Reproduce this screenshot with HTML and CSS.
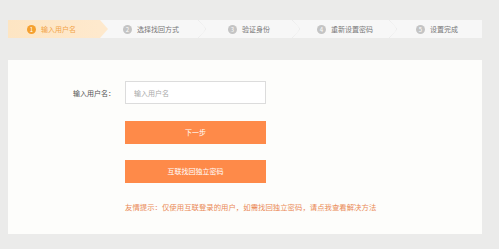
FILE: index.html
```html
<!DOCTYPE html>
<html lang="zh-CN">
<head>
  <meta charset="UTF-8">
  <title>找回密码</title>
  <link rel="stylesheet" href="styles.css">
</head>
<body>

<div class="steps">
  <div class="step now s1"><i>1</i>输入用户名</div>
  <div class="step s2"><i>2</i>选择找回方式</div>
  <div class="step s3"><i>3</i>验证身份</div>
  <div class="step s4"><i>4</i>重新设置密码</div>
  <div class="step s5"><i>5</i>设置完成</div>
</div>

<div class="panel">
  <div class="form">
    <label class="label" for="user">输入用户名：</label>
    <input class="ipt" id="user" type="text" placeholder="输入用户名">
    <a href="javascript:void(0);" class="btn">下一步</a>
    <a href="javascript:void(0);" class="btn">互联找回独立密码</a>
    <p class="tip">友情提示：仅使用互联登录的用户，如需找回独立密码，请点我查看解决方法</p>
  </div>
</div>

</body>
</html>
```

FILE: styles.css
```css
* {
  margin: 0;
  padding: 0;
  box-sizing: border-box;
}
body {
  background-color: #ebebea;
  font-family: "Noto Sans CJK SC", "Liberation Sans", sans-serif;
  font-size: 7px;
  color: #777;
  padding: 20px 17px 0 8px;
}

.steps {
  display: flex;
  height: 18px;
  background-color: #f7f7f7;
}
.step {
  display: flex;
  align-items: center;
  gap: 5px;
  padding-left: 19px;
  line-height: 18px;
  position: relative;
}
.step i {
  width: 9px;
  height: 9px;
  border-radius: 50%;
  background-color: #c4c4c4;
  color: #fff;
  font-style: normal;
  font-size: 6px;
  line-height: 9px;
  text-align: center;
}
.step::after {
  content: "";
  position: absolute;
  right: -1px;
  top: 0;
  width: 8px;
  height: 18px;
  background: linear-gradient(to top right, transparent 48%, #ececec 50%, transparent 56%) top / 100% 50% no-repeat,
              linear-gradient(to bottom right, transparent 48%, #ececec 50%, transparent 56%) bottom / 100% 50% no-repeat;
}
.s1 { width: 92px; }
.s2 { width: 105px; padding-left: 23px; }
.s3 { width: 94px; padding-left: 23px; }
.s4 { width: 97px; padding-left: 18px; }
.s5 { width: 85px; padding-left: 20px; }
.s5::after { display: none; }

.step.now {
  background: linear-gradient(to right, #fde5c3, #fee9cd);
  color: #f2a447;
}
.step.now i {
  background-color: #f5a02e;
}
.step.now::after {
  right: -8px;
  background: #fee9cd;
  clip-path: polygon(0 0, 100% 50%, 0 100%);
  z-index: 1;
}

.panel {
  margin-top: 22px;
  height: 174px;
  background-color: #fdfdfb;
  padding-top: 21px;
}

.form {
  display: grid;
  grid-template-columns: 107px 141px;
  column-gap: 10px;
  row-gap: 16px;
  align-items: center;
}
.label {
  grid-column: 1;
  text-align: right;
  color: #555;
}
.ipt {
  grid-column: 2;
  height: 23px;
  border: 1px solid #dcdcdc;
  background-color: #fff;
  padding-left: 8px;
  font-family: inherit;
  font-size: 7px;
  color: #555;
  outline: none;
}
.ipt::placeholder {
  color: #aaa;
}
.btn {
  grid-column: 2;
  display: block;
  height: 23px;
  line-height: 23px;
  background-color: #fe8a49;
  color: #fff;
  text-align: center;
  text-decoration: none;
}
.ipt + .btn {
  margin-top: 1px;
}
.tip {
  grid-column: 2;
  white-space: nowrap;
  color: #ea8a57;
  font-size: 7.4px;
  line-height: 12px;
  margin-top: 2px;
}
```
